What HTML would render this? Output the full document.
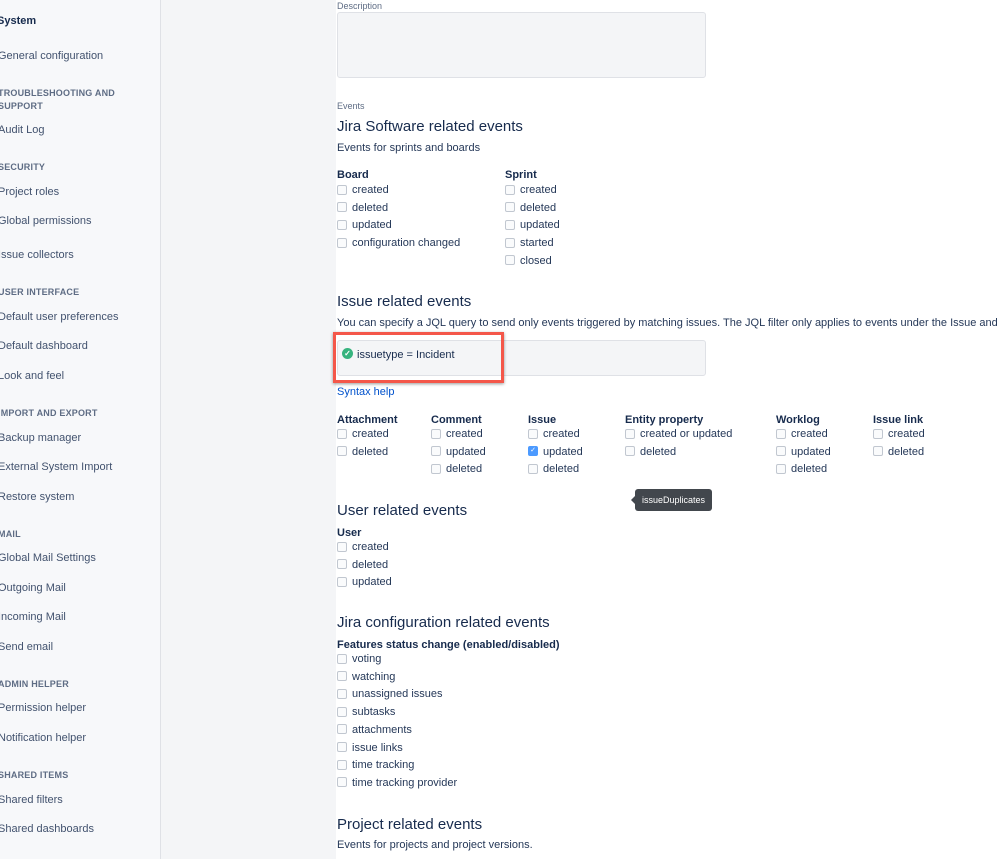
<!DOCTYPE html><html><head><style>
body{margin:0;width:999px;height:859px;overflow:hidden;background:#fff;font-family:"Liberation Sans",sans-serif;position:relative}
#sb{position:absolute;left:0;top:0;width:160px;height:859px;background:#f7f8fa;border-right:1px solid #dfe1e6}
#gut{position:absolute;left:161px;top:0;width:175px;height:859px;background:#f4f5f7}
.a{position:absolute;white-space:nowrap}
.n,.h,.t,.b,.g{margin-top:2px}
.n{font-size:11px;color:#42526e;left:-2px}
.h{font-size:9px;font-weight:bold;color:#5e6c84;left:-2px;letter-spacing:.2px}
.t{font-size:11px;color:#253858}
.b{font-size:11px;font-weight:bold;color:#172b4d}
.g{font-size:15px;color:#172b4d}
.c{position:absolute;width:8px;height:8px;border:1px solid #c1c7d0;border-radius:2px;background:#fafbfc}
.k{background:#4c9aff;border-color:#4c9aff;color:#fff;font-size:7px;line-height:8px;text-align:center}
</style></head><body>
<div id="sb"></div><div id="gut"></div>
<div class="a b" style="left:-3px;top:13px;color:#172b4d;font-size:11px">System</div>
<div class="a n" style="top:48px">General configuration</div>
<div class="a h" style="top:86px">TROUBLESHOOTING AND</div>
<div class="a h" style="top:99px">SUPPORT</div>
<div class="a n" style="top:122px">Audit Log</div>
<div class="a h" style="top:160px">SECURITY</div>
<div class="a n" style="top:184px">Project roles</div>
<div class="a n" style="top:213px">Global permissions</div>
<div class="a n" style="top:247px">Issue collectors</div>
<div class="a h" style="top:285px">USER INTERFACE</div>
<div class="a n" style="top:309px">Default user preferences</div>
<div class="a n" style="top:338px">Default dashboard</div>
<div class="a n" style="top:368px">Look and feel</div>
<div class="a h" style="top:406px">IMPORT AND EXPORT</div>
<div class="a n" style="top:430px">Backup manager</div>
<div class="a n" style="top:459px">External System Import</div>
<div class="a n" style="top:489px">Restore system</div>
<div class="a h" style="top:527px">MAIL</div>
<div class="a n" style="top:550px">Global Mail Settings</div>
<div class="a n" style="top:580px">Outgoing Mail</div>
<div class="a n" style="top:609px">Incoming Mail</div>
<div class="a n" style="top:639px">Send email</div>
<div class="a h" style="top:677px">ADMIN HELPER</div>
<div class="a n" style="top:700px">Permission helper</div>
<div class="a n" style="top:730px">Notification helper</div>
<div class="a h" style="top:768px">SHARED ITEMS</div>
<div class="a n" style="top:792px">Shared filters</div>
<div class="a n" style="top:821px">Shared dashboards</div>

<div class="a" style="left:337px;top:0;font-size:9px;color:#5e6c84;margin-top:1px">Description</div>
<div class="a" style="left:337px;top:12px;width:367px;height:64px;border:1px solid #dfe1e6;border-radius:3px;background:#f4f5f7"></div>
<div class="a" style="left:337px;top:101px;font-size:9px;color:#5e6c84">Events</div>
<div class="a g" style="left:337px;top:116px">Jira Software related events</div>
<div class="a t" style="left:337px;top:140px">Events for sprints and boards</div>

<div class="a b" style="left:337px;top:167px">Board</div>
<div class="a b" style="left:505px;top:167px">Sprint</div>
<div class="a" style="left:0;top:0" id="cb"></div>

<div class="a g" style="left:337px;top:291px">Issue related events</div>
<div class="a t" style="left:337px;top:315px;width:662px;overflow:hidden">You can specify a JQL query to send only events triggered by matching issues. The JQL filter only applies to events under the Issue and Comment columns.</div>
<div class="a" style="left:337px;top:340px;width:367px;height:34px;border:1px solid #dfe1e6;border-radius:3px;background:#f4f5f7"></div>
<div class="a" style="left:333px;top:332px;width:165px;height:45px;border:3px solid #f4574a;box-shadow:0 1px 3px rgba(0,0,0,.4)"></div>
<div class="a" style="left:342px;top:348px;width:11px;height:11px;border-radius:50%;background:#36b37e;color:#fff;font-size:8px;line-height:11px;text-align:center;font-weight:bold">✓</div>
<div class="a t" style="left:357px;top:347px;color:#172b4d">issuetype = Incident</div>
<div class="a" style="left:337px;top:386px;font-size:11px;color:#0052cc">Syntax help</div>

<div class="a b" style="left:337px;top:412px">Attachment</div>
<div class="a b" style="left:431px;top:412px">Comment</div>
<div class="a b" style="left:528px;top:412px">Issue</div>
<div class="a b" style="left:625px;top:412px">Entity property</div>
<div class="a b" style="left:776px;top:412px">Worklog</div>
<div class="a b" style="left:873px;top:412px">Issue link</div>

<div class="a" style="left:635px;top:489px;width:77px;height:22px;background:#42474d;border-radius:3px;color:#fff;font-size:9px;line-height:22px;text-align:center">issueDuplicates</div>
<div class="a" style="left:631px;top:496px;width:0;height:0;border-top:4px solid transparent;border-bottom:4px solid transparent;border-right:4px solid #42474d"></div>

<div class="a g" style="left:337px;top:500px">User related events</div>
<div class="a b" style="left:337px;top:525px">User</div>

<div class="a g" style="left:337px;top:612px">Jira configuration related events</div>
<div class="a b" style="left:337px;top:637px">Features status change (enabled/disabled)</div>

<div class="a g" style="left:337px;top:814px">Project related events</div>
<div class="a t" style="left:337px;top:837px">Events for projects and project versions.</div>

<script>
var L=[[337,189,["created","deleted","updated","configuration changed"]],[505,189,["created","deleted","updated","started","closed"]],
[337,433,["created","deleted"]],[431,433,["created","updated","deleted"]],[528,433,["created","updated","deleted"]],[625,433,["created or updated","deleted"]],[776,433,["created","updated","deleted"]],[873,433,["created","deleted"]],
[337,546,["created","deleted","updated"]],[337,658,["voting","watching","unassigned issues","subtasks","attachments","issue links","time tracking","time tracking provider"]]];
var h="";L.forEach(function(g){g[2].forEach(function(s,i){var y=g[1]+i*17.7;var k=(g[0]==528&&g[1]==433&&i==1);
h+='<div class="c'+(k?' k':'')+'" style="left:'+g[0]+'px;top:'+(y-4.5)+'px">'+(k?'✓':'')+'</div><div class="a t" style="left:'+(g[0]+15)+'px;top:'+(y-7)+'px">'+s+'</div>';});});
document.getElementById("cb").innerHTML=h;
</script>
</body></html>
